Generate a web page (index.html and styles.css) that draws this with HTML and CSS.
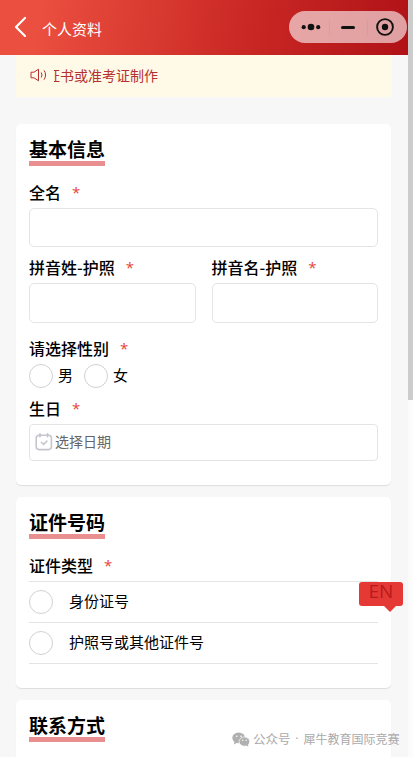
FILE: index.html
```html
<!DOCTYPE html>
<html lang="zh-CN">
<head>
    <meta charset="UTF-8">
    <meta name="viewport" content="width=device-width, initial-scale=1.0">
    <title>个人资料</title>
    <link rel="stylesheet" href="styles.css">
</head>
<body>
    <header class="navbar">
        <svg class="back" width="13" height="22" viewBox="0 0 13 22">
            <path d="M11 2L2 11l9 9" fill="none" stroke="#fff" stroke-width="2.2" stroke-linecap="round" stroke-linejoin="round"/>
        </svg>
        <span class="navbar-title">个人资料</span>
        <svg class="capsule" width="118" height="32" viewBox="0 0 118 32">
            <rect width="118" height="32" rx="16" fill="#fff" fill-opacity="0.6"/>
            <path d="M40.5 8v17M78.5 8v17" stroke="#d59a9b" stroke-opacity="0.6"/>
            <g fill="#111">
                <circle cx="14.7" cy="16.2" r="2.1"/>
                <circle cx="22" cy="16" r="3.3"/>
                <circle cx="29.2" cy="16.2" r="2.1"/>
                <rect x="52" y="15" width="14" height="3" rx="1.5"/>
                <circle cx="96" cy="16" r="3.2"/>
            </g>
            <circle cx="96" cy="16" r="7.9" fill="none" stroke="#111" stroke-width="1.9"/>
        </svg>
    </header>

    <main class="page">
        <div class="notice">
            <svg class="speaker" width="18" height="14" viewBox="0 0 18 14" fill="none" stroke="#b5302f">
                <path d="M1 4.2h3l4.500-3v11.600l-4.500-3H1zM11.300 4.500q1.400 2.500 0 5M14 2.300q3.200 4.700 0 9.400" stroke-linejoin="round"/>
            </svg>
            <div class="notice-window"><span class="notice-text">证书或准考证制作</span></div>
        </div>

        <section class="card">
            <h2 class="card-title">基本信息</h2>
            <label class="label" for="fullname">全名<span class="required">*</span></label>
            <input class="input" id="fullname" type="text">
            <div class="row">
                <div class="col">
                    <label class="label" for="surname">拼音姓-护照<span class="required">*</span></label>
                    <input class="input input-tall" id="surname" type="text">
                </div>
                <div class="col">
                    <label class="label" for="givenname">拼音名-护照<span class="required">*</span></label>
                    <input class="input input-tall" id="givenname" type="text">
                </div>
            </div>
            <div class="label label-gender">请选择性别<span class="required">*</span></div>
            <div class="genders">
                <label class="gender"><span class="radio"></span><span class="choice">男</span></label>
                <label class="gender"><span class="radio"></span><span class="choice">女</span></label>
            </div>
            <div class="label label-birthday">生日<span class="required">*</span></div>
            <div class="date">
                <svg width="18" height="18" viewBox="0 0 18 18" fill="none" stroke="#c5c5cf" stroke-linecap="round">
                    <rect x="1.200" y="2.200" width="15.200" height="14.400" rx="3" stroke-width="1.6"/>
                    <path d="M5 1v2.500M12.500 1v2.500" stroke-width="1.8"/>
                    <path d="M6.300 9.200l2.300 2.200 3.300-3.300" stroke-width="1.5"/>
                </svg>
                <span>选择日期</span>
            </div>
        </section>

        <section class="card">
            <h2 class="card-title">证件号码</h2>
            <div class="label">证件类型<span class="required">*</span></div>
            <div class="options">
                <label class="option"><span class="radio"></span><span class="choice">身份证号</span></label>
                <label class="option"><span class="radio"></span><span class="choice">护照号或其他证件号</span></label>
            </div>
        </section>

        <section class="card">
            <h2 class="card-title">联系方式</h2>
        </section>
    </main>

    <div class="lang">EN</div>
    <div class="watermark">
        <svg width="18" height="15" viewBox="0 0 18 15">
            <ellipse cx="6.7" cy="5.8" rx="6.4" ry="5.4" fill="#b0b0b0"/>
            <path d="M2.5 9L2 12.500l3.500-2z" fill="#b0b0b0"/>
            <ellipse cx="12.400" cy="9.600" rx="5.300" ry="4.600" fill="#b0b0b0" stroke="#fff" stroke-width="0.7"/>
            <path d="M13.500 13l2.800 1.700-.4-2.700z" fill="#b0b0b0"/>
            <g fill="#fff">
                <circle cx="4.700" cy="4.300" r="0.8"/>
                <circle cx="9" cy="4.300" r="0.8"/>
                <circle cx="10.700" cy="8.300" r="0.7"/>
                <circle cx="14.200" cy="8.300" r="0.7"/>
            </g>
        </svg>
        <span class="watermark-kind">公众号</span>
        <span class="watermark-dot">·</span>
        <span class="watermark-name">犀牛教育国际竞赛</span>
    </div>
    <div class="scrollbar"><div class="thumb"></div></div>
</body>
</html>
```
FILE: styles.css
```css
* {
    box-sizing: border-box;
}
body {
    margin: 0;
    height: 757px;
    overflow: hidden;
    position: relative;
    background-color: #f7f7f7;
    color: #000;
    font-family: "Noto Sans CJK SC", sans-serif;
    font-size: 15px;
}
.navbar {
    display: flex;
    align-items: center;
    width: 408px;
    height: 55px;
    padding: 0 1px 1px 14px;
    background: linear-gradient(100deg, #eb4f3f 10%, #c92824 60%, #b01217 100%);
}
.back {
    flex: none;
}
.navbar-title {
    margin-left: 15px;
    padding-top: 3px;
    line-height: 22px;
    color: #fff;
}
.capsule {
    margin-left: auto;
    flex: none;
}
.page {
    width: 408px;
    padding: 0 17px 0 16px;
}
.notice {
    display: flex;
    align-items: center;
    width: 376px;
    height: 42px;
    margin-bottom: 27px;
    padding: 0 0 2px 14px;
    background-color: #fffae8;
    color: #b5302f;
}
.notice-window {
    margin-left: 6px;
    overflow: hidden;
}
/* scrolling text, partly past the left edge of its window */
.notice-text {
    display: block;
    margin-left: -8px;
    font-size: 14px;
    line-height: 22px;
}
.card {
    margin-bottom: 12px;
    padding: 13px 13px 24px;
    background-color: #fff;
    border-radius: 5px;
    box-shadow: 0 1px 1px rgba(0, 0, 0, 0.1);
}
.card-title {
    width: 76px;
    height: 29px;
    margin: 0 0 12px;
    border-bottom: 5px solid #ea8f90;
    font-size: 19px;
    font-weight: bold;
    line-height: 23px;
    white-space: nowrap;
}
.label {
    display: flex;
    height: 30px;
    font-size: 16px;
    font-weight: 500;
    line-height: 28px;
    white-space: nowrap;
}
.required {
    margin-left: 11px;
    color: #e64340;
    font-family: "Open Sans", sans-serif;
    font-size: 15px;
    font-weight: normal;
    line-height: 28px;
}
.input {
    display: block;
    width: 100%;
    height: 39px;
    padding: 0 8px;
    border: 1px solid #e4e4e4;
    border-radius: 5px;
    outline: none;
    background-color: #fff;
}
.input-tall {
    height: 40px;
}
.row {
    display: flex;
    gap: 16px;
    margin-top: 6px;
}
.col {
    flex: 1;
}
.label-gender {
    margin-top: 11px;
}
.genders {
    display: flex;
    gap: 11px;
}
.gender {
    display: flex;
    align-items: center;
    gap: 5px;
    height: 24px;
}
.choice {
    padding-bottom: 2px;
    line-height: 22px;
}
.radio {
    flex: none;
    width: 24px;
    height: 24px;
    border: 1px solid #d1d1d1;
    border-radius: 50%;
}
.label-birthday {
    margin-top: 6px;
}
.date {
    display: flex;
    align-items: center;
    gap: 2px;
    height: 37px;
    padding: 0 0 2px 5px;
    border: 1px solid #e4e4e4;
    border-radius: 4px;
    color: #666;
    font-size: 14px;
    line-height: 20px;
}
.date span {
    padding-bottom: 2px;
}
.options {
    border-top: 1px solid #e4e4e4;
}
.option {
    display: flex;
    align-items: center;
    gap: 16px;
    height: 41px;
    border-bottom: 1px solid #e4e4e4;
}
/* floating language switch */
.lang {
    position: absolute;
    left: 359px;
    top: 582px;
    width: 44px;
    height: 24px;
    border-radius: 3px;
    background-color: #e53935;
    color: #b71c1c;
    font-family: "Open Sans", sans-serif;
    font-size: 19px;
    line-height: 18px;
    text-align: center;
}
.lang::after {
    content: "";
    position: absolute;
    left: 25px;
    top: 24px;
    border: 6px solid transparent;
    border-top-color: #e53935;
    border-bottom: 0;
}
.watermark {
    position: absolute;
    left: 232px;
    top: 729px;
    display: flex;
    align-items: center;
    height: 20px;
    color: #aaa;
    font-size: 12.5px;
    line-height: 20px;
    white-space: nowrap;
}
.watermark-kind {
    margin-left: 3px;
}
.watermark-dot {
    width: 13px;
    font-family: "Open Sans", sans-serif;
    text-align: center;
}
.watermark-name {
    font-size: 12px;
}
.scrollbar {
    position: absolute;
    right: 0;
    top: 0;
    width: 5px;
    height: 757px;
    background-color: #fcfcfc;
}
.thumb {
    height: 400px;
    background-color: #ccc;
}
```
